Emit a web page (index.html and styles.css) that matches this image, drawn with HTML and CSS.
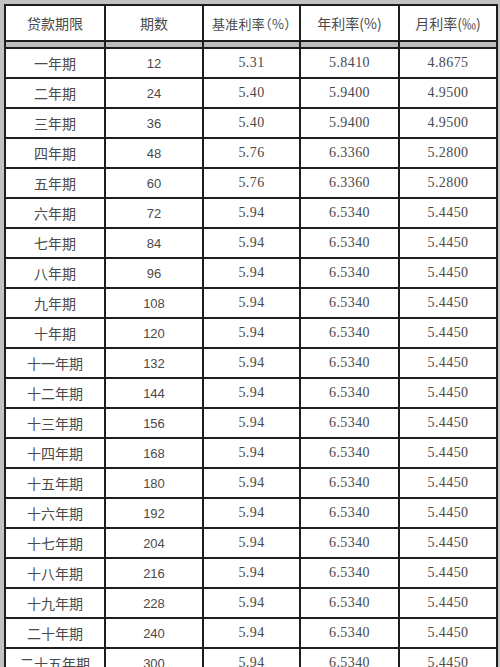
FILE: index.html
```html
<!DOCTYPE html>
<html lang="zh">
<head>
<meta charset="utf-8">
<title>贷款利率表</title>
<link rel="stylesheet" href="styles.css">
</head>
<body>
<div class="sheet">
  <div class="row head">
    <div class="cell">贷款期限</div>
    <div class="cell">期数</div>
    <div class="cell wide">基准利率（%）</div>
    <div class="cell">年利率(%)</div>
    <div class="cell">月利率(‰)</div>
  </div>
  <div class="row band">
    <div class="cell"></div><div class="cell"></div><div class="cell"></div><div class="cell"></div><div class="cell"></div>
  </div>
  <div class="row"><div class="cell">一年期</div><div class="cell n">12</div><div class="cell d">5.31</div><div class="cell d">5.8410</div><div class="cell d">4.8675</div></div>
  <div class="row"><div class="cell">二年期</div><div class="cell n">24</div><div class="cell d">5.40</div><div class="cell d">5.9400</div><div class="cell d">4.9500</div></div>
  <div class="row"><div class="cell">三年期</div><div class="cell n">36</div><div class="cell d">5.40</div><div class="cell d">5.9400</div><div class="cell d">4.9500</div></div>
  <div class="row"><div class="cell">四年期</div><div class="cell n">48</div><div class="cell d">5.76</div><div class="cell d">6.3360</div><div class="cell d">5.2800</div></div>
  <div class="row"><div class="cell">五年期</div><div class="cell n">60</div><div class="cell d">5.76</div><div class="cell d">6.3360</div><div class="cell d">5.2800</div></div>
  <div class="row"><div class="cell">六年期</div><div class="cell n">72</div><div class="cell d">5.94</div><div class="cell d">6.5340</div><div class="cell d">5.4450</div></div>
  <div class="row"><div class="cell">七年期</div><div class="cell n">84</div><div class="cell d">5.94</div><div class="cell d">6.5340</div><div class="cell d">5.4450</div></div>
  <div class="row"><div class="cell">八年期</div><div class="cell n">96</div><div class="cell d">5.94</div><div class="cell d">6.5340</div><div class="cell d">5.4450</div></div>
  <div class="row"><div class="cell">九年期</div><div class="cell n">108</div><div class="cell d">5.94</div><div class="cell d">6.5340</div><div class="cell d">5.4450</div></div>
  <div class="row"><div class="cell">十年期</div><div class="cell n">120</div><div class="cell d">5.94</div><div class="cell d">6.5340</div><div class="cell d">5.4450</div></div>
  <div class="row"><div class="cell">十一年期</div><div class="cell n">132</div><div class="cell d">5.94</div><div class="cell d">6.5340</div><div class="cell d">5.4450</div></div>
  <div class="row"><div class="cell">十二年期</div><div class="cell n">144</div><div class="cell d">5.94</div><div class="cell d">6.5340</div><div class="cell d">5.4450</div></div>
  <div class="row"><div class="cell">十三年期</div><div class="cell n">156</div><div class="cell d">5.94</div><div class="cell d">6.5340</div><div class="cell d">5.4450</div></div>
  <div class="row"><div class="cell">十四年期</div><div class="cell n">168</div><div class="cell d">5.94</div><div class="cell d">6.5340</div><div class="cell d">5.4450</div></div>
  <div class="row"><div class="cell">十五年期</div><div class="cell n">180</div><div class="cell d">5.94</div><div class="cell d">6.5340</div><div class="cell d">5.4450</div></div>
  <div class="row"><div class="cell">十六年期</div><div class="cell n">192</div><div class="cell d">5.94</div><div class="cell d">6.5340</div><div class="cell d">5.4450</div></div>
  <div class="row"><div class="cell">十七年期</div><div class="cell n">204</div><div class="cell d">5.94</div><div class="cell d">6.5340</div><div class="cell d">5.4450</div></div>
  <div class="row"><div class="cell">十八年期</div><div class="cell n">216</div><div class="cell d">5.94</div><div class="cell d">6.5340</div><div class="cell d">5.4450</div></div>
  <div class="row"><div class="cell">十九年期</div><div class="cell n">228</div><div class="cell d">5.94</div><div class="cell d">6.5340</div><div class="cell d">5.4450</div></div>
  <div class="row"><div class="cell">二十年期</div><div class="cell n">240</div><div class="cell d">5.94</div><div class="cell d">6.5340</div><div class="cell d">5.4450</div></div>
  <div class="row"><div class="cell">二十五年期</div><div class="cell n">300</div><div class="cell d">5.94</div><div class="cell d">6.5340</div><div class="cell d">5.4450</div></div>
</div>
</body>
</html>
```

FILE: styles.css
```css
html, body {
  margin: 0;
  padding: 0;
  background: #c2c2c2;
  overflow: hidden;
}
body {
  width: 500px;
  height: 667px;
}
.sheet {
  box-sizing: border-box;
  width: 494px;
  margin: 4px 0 0 4px;
  border-left: 2px solid #1e1e1e;
  border-top: 2px solid #1e1e1e;
  background: #fff;
}
.row {
  display: grid;
  grid-template-columns: 100px 98px 97px 99px 98px;
  height: 30px;
}
.cell {
  box-sizing: border-box;
  border-right: 2px solid #1e1e1e;
  border-bottom: 2px solid #1e1e1e;
  display: flex;
  align-items: center;
  justify-content: center;
  font-family: "Noto Sans CJK SC", sans-serif;
  font-size: 14px;
  font-weight: 400;
  color: #4a4a4a;
  white-space: nowrap;
  overflow: hidden;
}
.head {
  height: 36px;
}
.head .cell {
  font-size: 14px;
}
.head .wide {
  font-size: 13px;
  font-feature-settings: "halt";
  letter-spacing: 0.3px;
}
.band {
  height: 7px;
}
.band .cell {
  background: #bdbdbd;
}
.n {
  font-family: "Liberation Sans", sans-serif;
  font-size: 13px;
}
.d {
  font-family: "Liberation Serif", serif;
  font-size: 14px;
  letter-spacing: 0.4px;
}
```
